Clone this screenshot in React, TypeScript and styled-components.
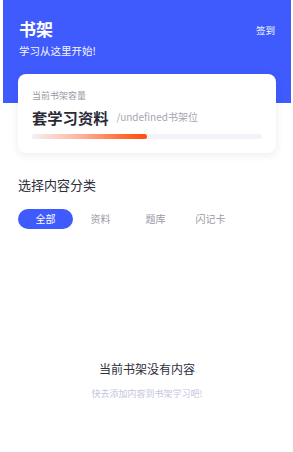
import * as React from 'react';
import styled, { createGlobalStyle } from 'styled-components';

const GlobalStyle = createGlobalStyle`
  html, body {
    margin: 0;
    padding: 0;
    background: #ffffff;
  }
  body {
    font-family: "Noto Sans CJK SC", "Noto Sans", sans-serif;
  }
`;

const Page = styled.div`
  width: 288px;
  margin: 0 2px 0 3px;
  min-height: 452px;
  display: flex;
  flex-direction: column;
`;

const Header = styled.header`
  background: #3f5bfd;
  padding: 19px 16px 45px 16px;
  display: flex;
  justify-content: space-between;
  align-items: flex-start;
  color: #ffffff;
`;

const HeaderText = styled.div`
  display: flex;
  flex-direction: column;
  gap: 5px;
`;

const Title = styled.h1`
  margin: 0;
  font-size: 17px;
  line-height: 20px;
  font-weight: 700;
`;

const Subtitle = styled.p`
  margin: 0;
  font-size: 10.5px;
  line-height: 14px;
  opacity: 0.95;
`;

const SignIn = styled.span`
  font-size: 9.5px;
  line-height: 20px;
  margin-top: 1px;
`;

const Card = styled.section`
  margin: -29px 15px 0 15px;
  background: #ffffff;
  border-radius: 8px;
  box-shadow: 0 2px 8px rgba(30, 40, 90, 0.09);
  padding: 15.5px 14px 14px 14px;
  display: flex;
  flex-direction: column;
`;

const CardLabel = styled.div`
  font-size: 9px;
  line-height: 12px;
  color: #9a9aa6;
`;

const CardRow = styled.div`
  margin-top: 4px;
  display: flex;
  align-items: center;
  gap: 8px;
`;

const CardValue = styled.span`
  font-size: 15.3px;
  line-height: 22px;
  font-weight: 700;
  color: #2a2a36;
`;

const CardUnit = styled.span`
  font-size: 10px;
  line-height: 14px;
  color: #a6a6b2;
`;

const Track = styled.div`
  margin-top: 6px;
  height: 5px;
  border-radius: 3px;
  background: #f3f2fa;
  overflow: hidden;
`;

const Fill = styled.div`
  height: 100%;
  border-radius: 3px;
  background: linear-gradient(90deg, #f6eef5 0%, #fbb7a0 40%, #ff6a34 80%, #ff4f12 100%);
`;

const SectionTitle = styled.h2`
  margin: 23.5px 0 0 15px;
  font-size: 13px;
  line-height: 18px;
  font-weight: 400;
  color: #2e2e3c;
`;

const Tabs = styled.nav`
  margin: 14.5px 0 0 15px;
  display: flex;
`;

const Tab = styled.button<{ $active?: boolean }>`
  width: 55px;
  height: 20px;
  padding: 0;
  border: none;
  border-radius: 10px;
  font-family: inherit;
  font-size: 10px;
  line-height: 20px;
  background: ${(p) => (p.$active ? '#3f5bfd' : 'transparent')};
  color: ${(p) => (p.$active ? '#ffffff' : '#9a9aa6')};
  cursor: pointer;
`;

const Empty = styled.div`
  margin-top: 132px;
  display: flex;
  flex-direction: column;
  align-items: center;
  gap: 11px;
`;

const EmptyTitle = styled.div`
  font-size: 12px;
  line-height: 16px;
  color: #2e2e3c;
`;

const EmptyHint = styled.div`
  font-size: 9px;
  line-height: 12px;
  color: #c4c6e0;
`;

const tabs = ['全部', '资料', '题库', '闪记卡'];

const App = () => {
  const [active, setActive] = React.useState(0);
  const used = 0.5;

  return (
    <Page>
      <GlobalStyle />
      <Header>
        <HeaderText>
          <Title>书架</Title>
          <Subtitle>学习从这里开始!</Subtitle>
        </HeaderText>
        <SignIn>签到</SignIn>
      </Header>

      <Card>
        <CardLabel>当前书架容量</CardLabel>
        <CardRow>
          <CardValue>套学习资料</CardValue>
          <CardUnit>/undefined书架位</CardUnit>
        </CardRow>
        <Track>
          <Fill style={{ width: `${used * 100}%` }} />
        </Track>
      </Card>

      <SectionTitle>选择内容分类</SectionTitle>
      <Tabs>
        {tabs.map((t, i) => (
          <Tab key={t} $active={i === active} onClick={() => setActive(i)}>
            {t}
          </Tab>
        ))}
      </Tabs>

      <Empty>
        <EmptyTitle>当前书架没有内容</EmptyTitle>
        <EmptyHint>快去添加内容到书架学习吧!</EmptyHint>
      </Empty>
    </Page>
  );
};

export default App;
